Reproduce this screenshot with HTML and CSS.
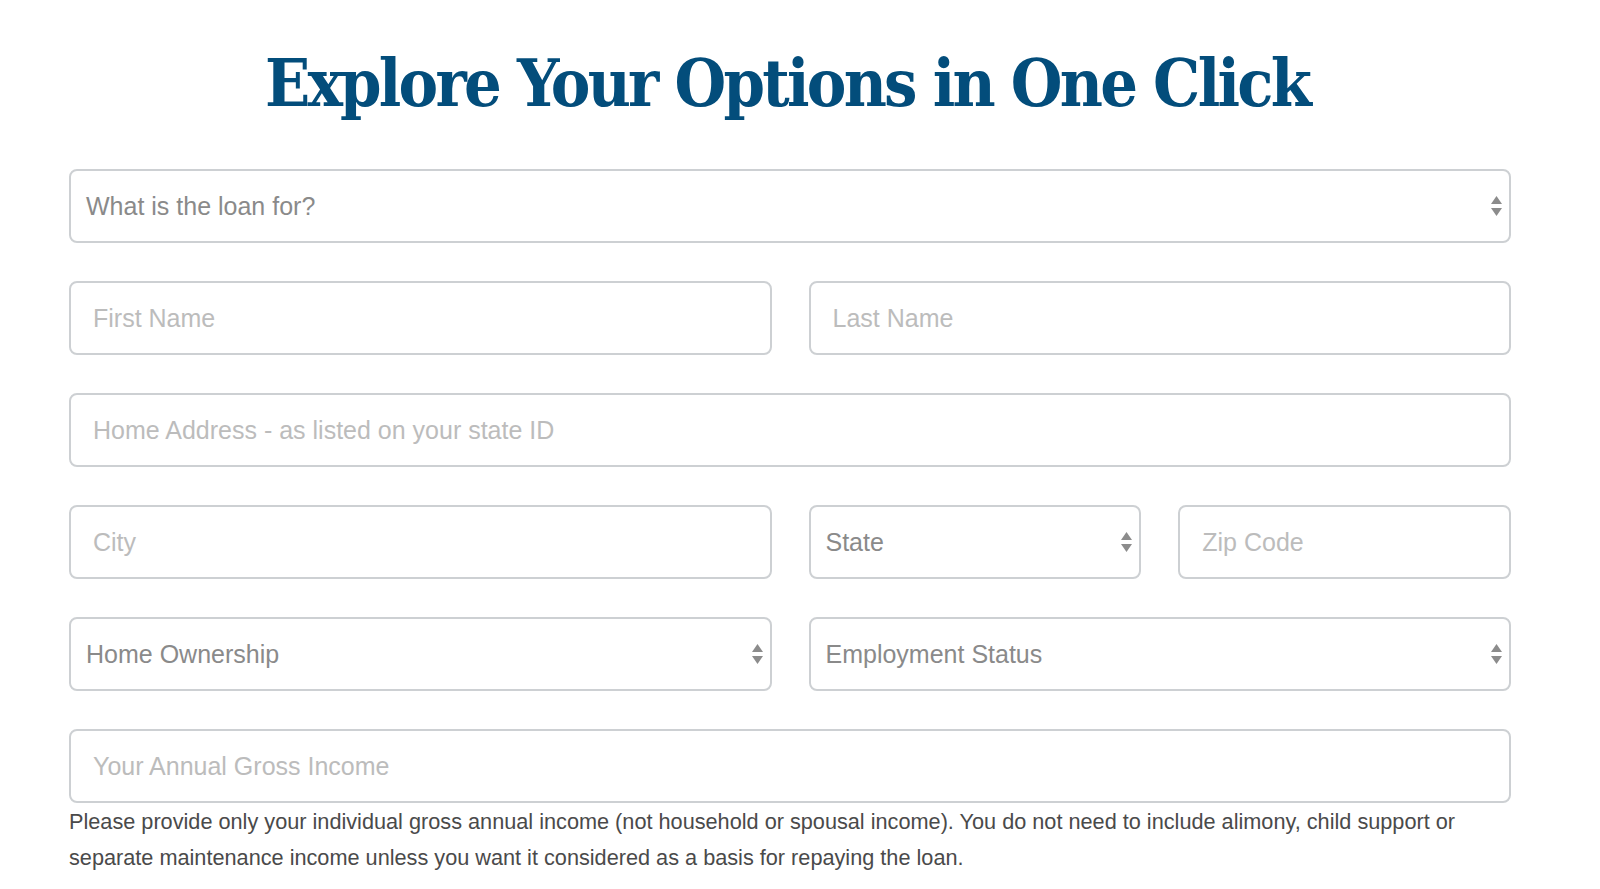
FILE: index.html
```html
<!DOCTYPE html>
<html lang="en">
<head>
<meta charset="utf-8">
<title>Explore Your Options in One Click</title>
<link rel="stylesheet" href="styles.css">
</head>
<body>
<main class="page">
  <h1 class="title">Explore Your Options in One Click</h1>
  <form class="form">
    <div class="field select">
      <span class="select-text">What is the loan for?</span>
      <svg class="arrows" width="11" height="20" viewBox="0 0 11 20"><path d="M5.5 0 L11 8 L0 8 Z M0 12 L11 12 L5.5 20 Z" fill="#8c8c8c"/></svg>
    </div>
    <div class="row two">
      <input class="field input" type="text" placeholder="First Name">
      <input class="field input" type="text" placeholder="Last Name">
    </div>
    <input class="field input" type="text" placeholder="Home Address - as listed on your state ID">
    <div class="row two">
      <input class="field input" type="text" placeholder="City">
      <div class="row two">
        <div class="field select">
          <span class="select-text">State</span>
          <svg class="arrows" width="11" height="20" viewBox="0 0 11 20"><path d="M5.5 0 L11 8 L0 8 Z M0 12 L11 12 L5.5 20 Z" fill="#8c8c8c"/></svg>
        </div>
        <input class="field input" type="text" placeholder="Zip Code">
      </div>
    </div>
    <div class="row two">
      <div class="field select">
        <span class="select-text">Home Ownership</span>
        <svg class="arrows" width="11" height="20" viewBox="0 0 11 20"><path d="M5.5 0 L11 8 L0 8 Z M0 12 L11 12 L5.5 20 Z" fill="#8c8c8c"/></svg>
      </div>
      <div class="field select">
        <span class="select-text">Employment Status</span>
        <svg class="arrows" width="11" height="20" viewBox="0 0 11 20"><path d="M5.5 0 L11 8 L0 8 Z M0 12 L11 12 L5.5 20 Z" fill="#8c8c8c"/></svg>
      </div>
    </div>
    <div class="income">
      <input class="field input" type="text" placeholder="Your Annual Gross Income">
      <p class="note">Please provide only your individual gross annual income (not household or spousal income). You do not need to include alimony, child support or separate maintenance income unless you want it considered as a basis for repaying the loan.</p>
    </div>
  </form>
</main>
</body>
</html>
```

FILE: styles.css
```css
* { box-sizing: border-box; }
html, body { margin: 0; padding: 0; background: #ffffff; }
body { font-family: "Liberation Sans", Arial, sans-serif; }
.page {
  width: 1442px;
  margin-left: 69px;
  padding-top: 43px;
}
.title {
  margin: 0 0 46px 0;
  padding-right: 6px;
  text-align: center;
  font-family: "DejaVu Serif Condensed", "DejaVu Serif", serif;
  font-stretch: condensed;
  font-weight: bold;
  font-size: 66px;
  line-height: 80px;
  color: #034d7b;
  letter-spacing: -2.75px;
}
.form {
  display: flex;
  flex-direction: column;
  gap: 38px;
}
.row.two {
  display: grid;
  grid-template-columns: 1fr 1fr;
  gap: 37px;
}
.field {
  height: 74px;
  width: 100%;
  border: 2px solid #cdd0d3;
  border-radius: 8px;
  background: #fff;
  font-family: "Liberation Sans", Arial, sans-serif;
  font-size: 25px;
}
.input {
  display: block;
  padding: 0 22px;
  color: #555;
  outline: none;
}
.input::placeholder { color: #bcbcbc; opacity: 1; }
.select {
  display: flex;
  align-items: center;
  justify-content: space-between;
  padding: 0 7px 0 15px;
  color: #8a8a8a;
}
.arrows { display: block; }
.note {
  margin: 1px 0 0 0;
  font-size: 21.7px;
  line-height: 36px;
  color: #4a4a4a;
}
```
